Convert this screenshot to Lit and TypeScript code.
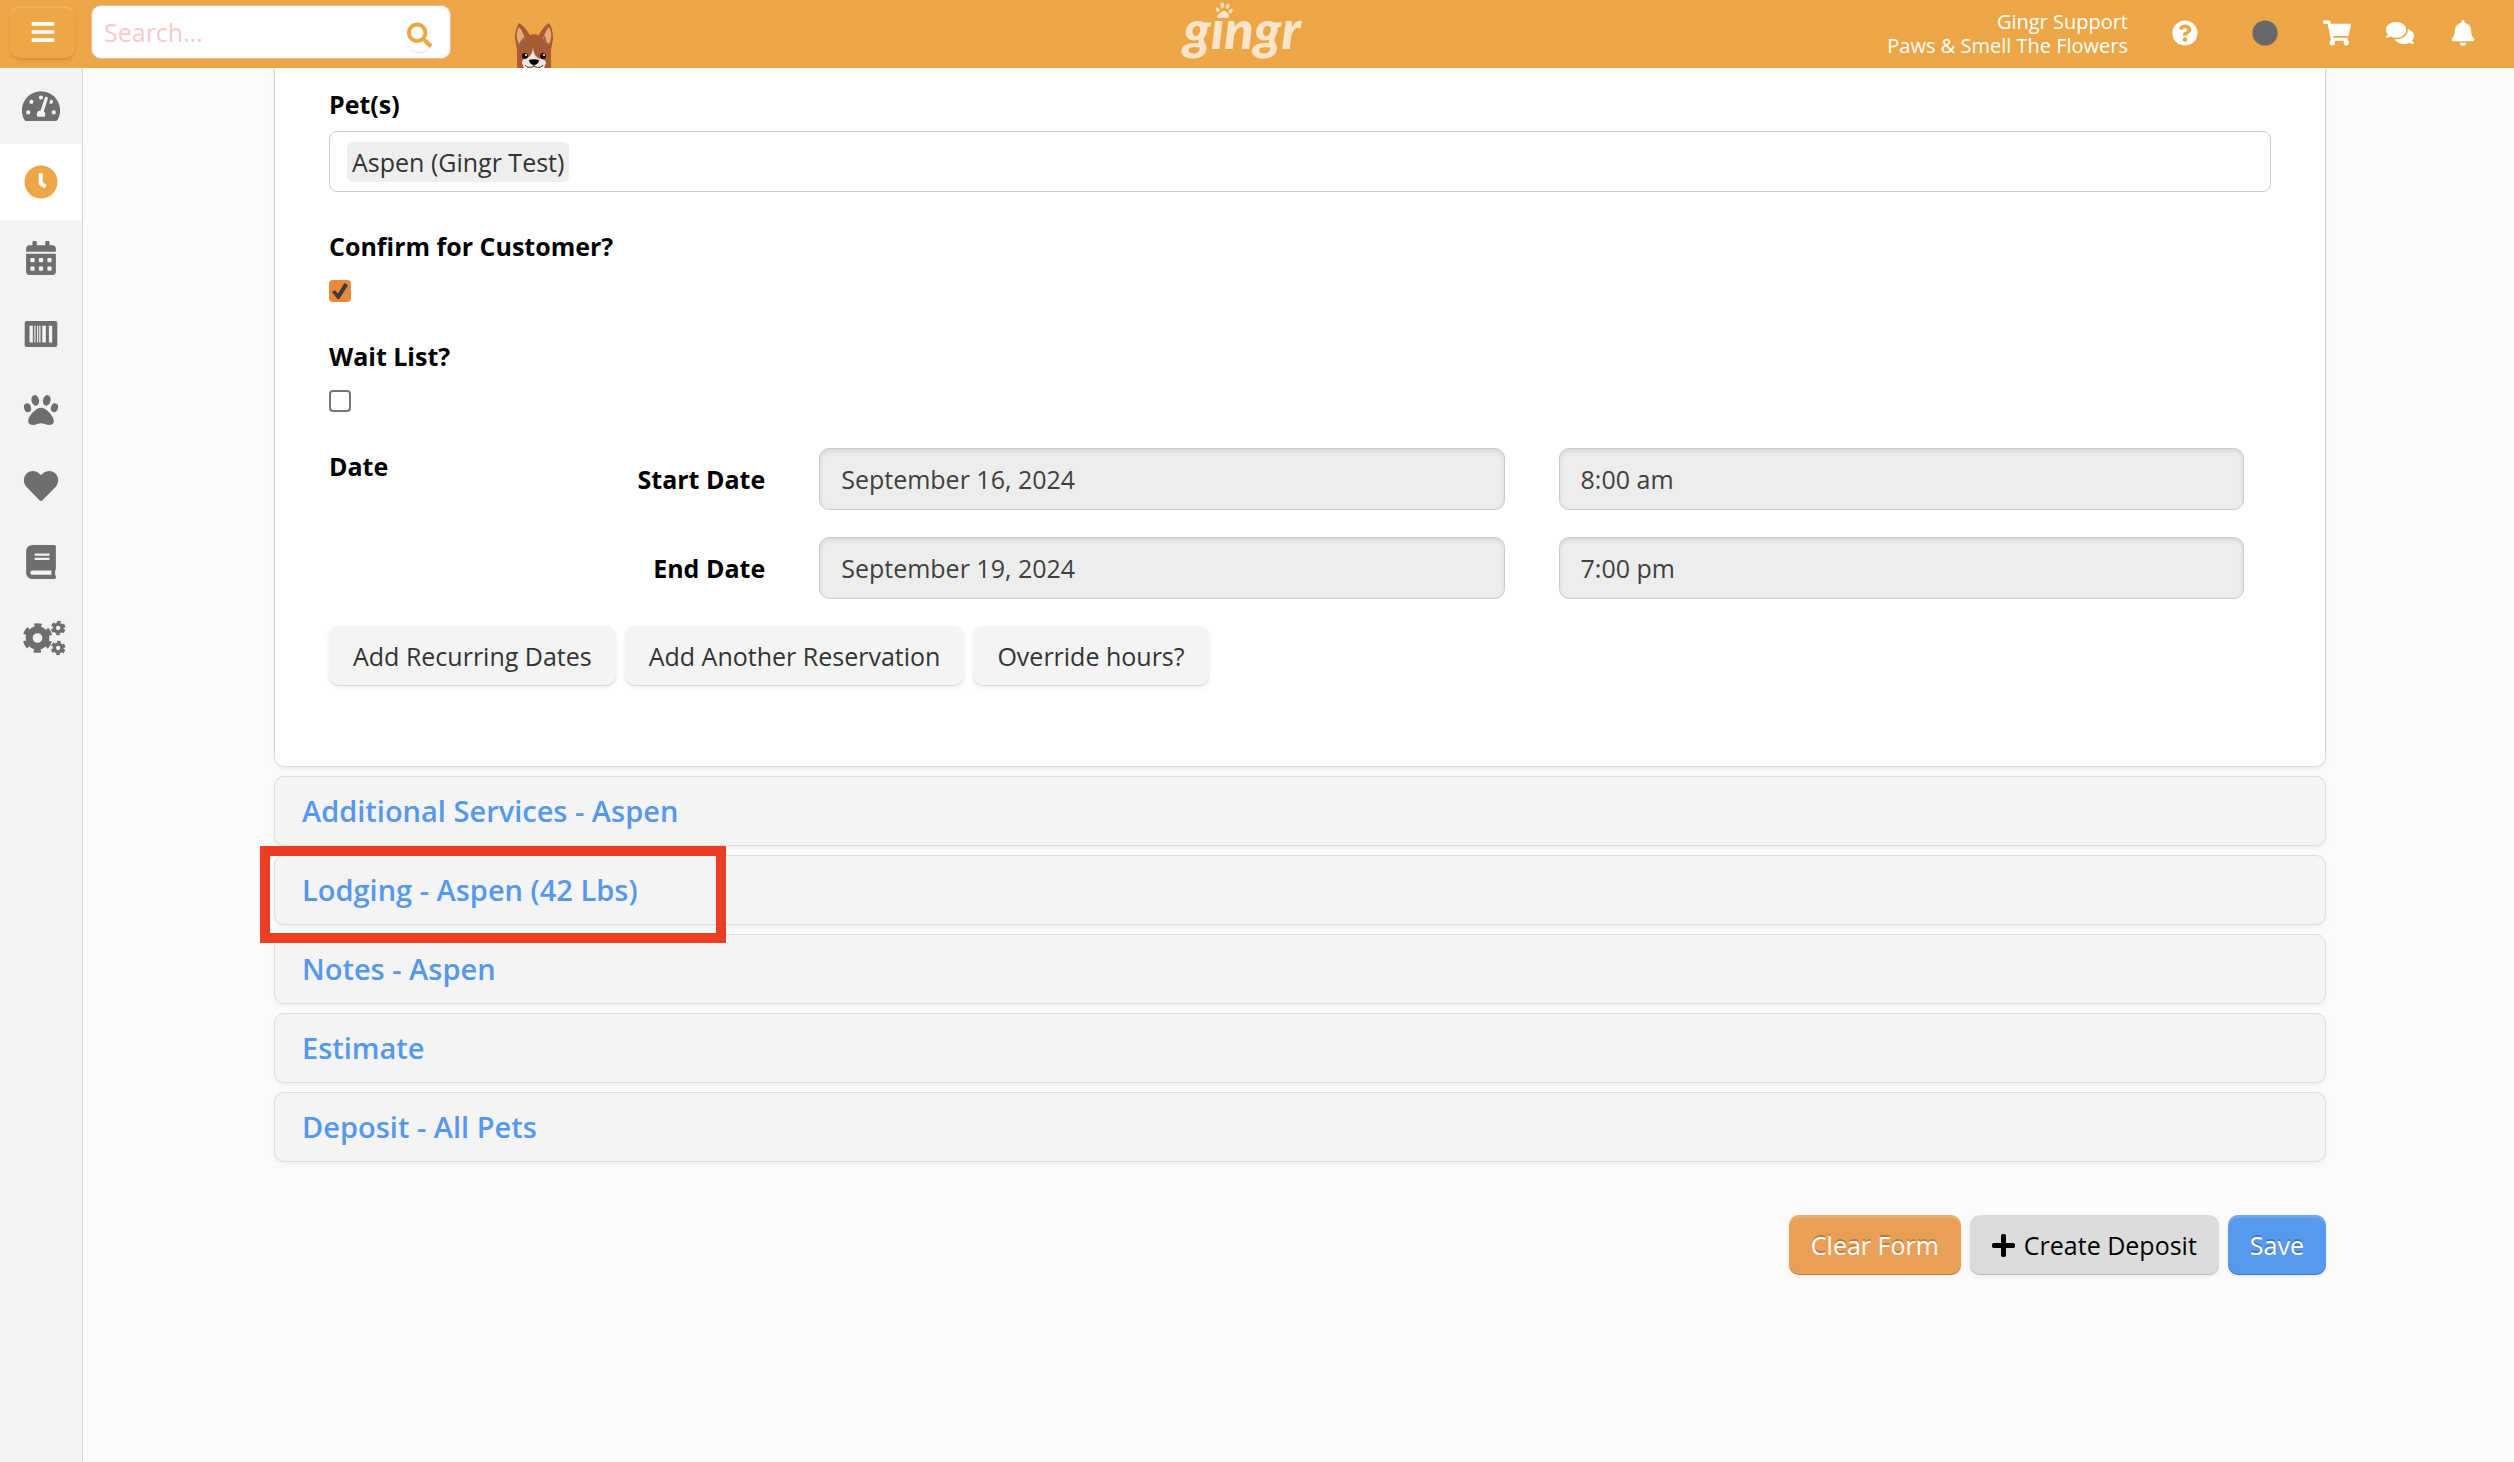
import { LitElement, html, css, svg } from "lit";
import { customElement, property } from "lit/decorators.js";

const ICONS: Record<string, { box: string; body: unknown }> = {
  bars: {
    box: "0 0 448 512",
    body: svg`<path d="M16 132h416c9 0 16-7 16-16V76c0-9-7-16-16-16H16C7 60 0 67 0 76v40c0 9 7 16 16 16zm0 160h416c9 0 16-7 16-16v-40c0-9-7-16-16-16H16c-9 0-16 7-16 16v40c0 9 7 16 16 16zm0 160h416c9 0 16-7 16-16v-40c0-9-7-16-16-16H16c-9 0-16 7-16 16v40c0 9 7 16 16 16z"/>`,
  },
  search: {
    box: "0 0 512 512",
    body: svg`<path d="M505 442.700L405.300 343c-4.500-4.500-10.600-7-17-7H372c27.600-35.300 44-79.700 44-128C416 93.100 322.900 0 208 0S0 93.100 0 208s93.100 208 208 208c48.300 0 92.700-16.400 128-44v16.300c0 6.400 2.500 12.500 7 17l99.700 99.700c9.400 9.400 24.600 9.400 33.900 0l28.300-28.300c9.400-9.400 9.400-24.600.1-34zM208 336c-70.700 0-128-57.200-128-128 0-70.700 57.200-128 128-128 70.700 0 128 57.200 128 128 0 70.700-57.200 128-128 128z"/>`,
  },
  help: {
    box: "0 0 512 512",
    body: svg`<path d="M504 256c0 137-111 248-248 248S8 393 8 256C8 119.100 119 8 256 8s248 111.100 248 248zM262.700 90c-54.500 0-89.300 23-116.500 63.800-3.500 5.300-2.400 12.400 2.700 16.300l34.700 26.300c5.200 3.900 12.600 3 16.700-2.100 17.900-22.700 30.100-35.800 57.300-35.800 20.400 0 45.700 13.100 45.700 33 0 15-12.400 22.700-32.500 34C247.100 238.500 216 254.900 216 296v4c0 6.600 5.400 12 12 12h56c6.600 0 12-5.400 12-12v-1.300c0-28.500 83.200-29.600 83.200-106.700 0-58-60.200-102-116.500-102zM256 338c-25.400 0-46 20.600-46 46 0 25.400 20.600 46 46 46s46-20.600 46-46c0-25.400-20.600-46-46-46z"/>`,
  },
  dot: { box: "0 0 512 512", body: svg`<circle cx="256" cy="256" r="248"/>` },
  cart: {
    box: "0 0 576 512",
    body: svg`<path d="M528.100 301.300l47.300-208C578.800 78.300 567.400 64 552 64H159.200l-9.200-44.800C147.800 8 137.900 0 126.500 0H24C10.700 0 0 10.700 0 24v16c0 13.300 10.700 24 24 24h69.900l70.200 343.400C147.300 417.100 136 435.200 136 456c0 30.900 25.100 56 56 56s56-25.100 56-56c0-15.700-6.400-29.800-16.800-40h209.600C430.400 426.200 424 440.300 424 456c0 30.900 25.100 56 56 56s56-25.100 56-56c0-22.200-12.900-41.300-31.600-50.400l5.500-24.300c3.400-15-8-29.300-23.400-29.300H218.100l-6.500-32h293.100c11.200 0 20.900-7.800 23.400-18.700z"/>`,
  },
  comments: {
    box: "0 0 576 512",
    body: svg`<path d="M416 192c0-88.400-93.100-160-208-160S0 103.600 0 192c0 34.300 14.100 65.900 38 92-13.400 30.200-35.500 54.200-35.800 54.500-2.200 2.300-2.800 5.700-1.500 8.700S4.800 352 8 352c36.600 0 66.900-12.300 88.700-25 32.200 15.700 70.300 25 111.300 25 114.900 0 208-71.600 208-160zm122 220c23.900-26 38-57.700 38-92 0-66.900-53.500-124.200-129.300-148.100.9 6.600 1.300 13.300 1.300 20.100 0 105.900-107.700 192-240 192-10.800 0-21.300-.8-31.700-1.900C207.800 439.600 281.800 480 368 480c41 0 79.100-9.200 111.300-25 21.800 12.700 52.100 25 88.700 25 3.200 0 6.100-1.900 7.300-4.800 1.300-2.900.7-6.300-1.500-8.700-.3-.3-22.400-24.200-35.800-54.500z"/>`,
  },
  bell: {
    box: "0 0 448 512",
    body: svg`<path d="M224 512c35.300 0 63.900-28.600 63.900-64H160.100c0 35.400 28.600 64 63.900 64zm215.400-149.700c-19.300-20.800-55.500-52-55.500-154.300 0-77.700-54.500-139.900-127.900-155.200V32c0-17.700-14.300-32-32-32s-32 14.300-32 32v20.800C118.600 68.100 64.100 130.300 64.100 208c0 102.300-36.200 133.500-55.500 154.300-6 6.400-8.700 14.100-8.600 21.700.1 16.400 13 32 32.100 32h383.800c19.100 0 32-15.600 32.100-32 .1-7.600-2.600-15.300-8.600-21.700z"/>`,
  },
  gauge: {
    box: "0 0 576 512",
    body: svg`<path fill-rule="evenodd" d="M288 32C129 32 0 161 0 320c0 53 14 102 39 145 6 10 16 15 28 15h442c12 0 22-5 28-15 25-43 39-92 39-145C576 161 447 32 288 32zM288 96a32 32 0 1 1 0 64 32 32 0 0 1 0-64zM96 384a32 32 0 1 1 0-64 32 32 0 0 1 0 64zm48-160a32 32 0 1 1 0-64 32 32 0 0 1 0 64zm247-77l-62 193c15 11 23 26 23 44 0 12-3 22-9 32H233c-6-10-9-20-9-32 0-34 27-62 60-64l61-188c4-13 18-20 30-16 13 4 20 18 16 31zm23 66l16-49c4-3 9-4 14-4a32 32 0 1 1-30 53zm66 171a32 32 0 1 1 0-64 32 32 0 0 1 0 64z"/>`,
  },
  clock: {
    box: "0 0 512 512",
    body: svg`<circle cx="256" cy="256" r="248"/><path d="M252 124v152l72 54" fill="none" stroke="#fff" stroke-width="60" stroke-linejoin="round"/>`,
  },
  calendar: {
    box: "0 0 448 512",
    body: svg`<path fill-rule="evenodd" d="M0 464c0 26.500 21.500 48 48 48h352c26.500 0 48-21.500 48-48V192H0v272zM320 268c0-6.600 5.400-12 12-12h40c6.600 0 12 5.400 12 12v40c0 6.600-5.400 12-12 12h-40c-6.600 0-12-5.400-12-12v-40zm0 128c0-6.600 5.400-12 12-12h40c6.600 0 12 5.400 12 12v40c0 6.600-5.400 12-12 12h-40c-6.600 0-12-5.400-12-12v-40zM192 268c0-6.600 5.400-12 12-12h40c6.600 0 12 5.400 12 12v40c0 6.600-5.400 12-12 12h-40c-6.600 0-12-5.400-12-12v-40zm0 128c0-6.600 5.400-12 12-12h40c6.600 0 12 5.400 12 12v40c0 6.600-5.400 12-12 12h-40c-6.600 0-12-5.400-12-12v-40zM64 268c0-6.600 5.400-12 12-12h40c6.600 0 12 5.400 12 12v40c0 6.600-5.400 12-12 12H76c-6.600 0-12-5.400-12-12v-40zm0 128c0-6.600 5.400-12 12-12h40c6.600 0 12 5.400 12 12v40c0 6.600-5.400 12-12 12H76c-6.600 0-12-5.400-12-12v-40zM400 64h-48V16c0-8.800-7.200-16-16-16h-32c-8.800 0-16 7.200-16 16v48H160V16c0-8.800-7.200-16-16-16h-32c-8.800 0-16 7.200-16 16v48H48C21.500 64 0 85.500 0 112v48h448v-48c0-26.500-21.500-48-48-48z"/>`,
  },
  barcode: {
    box: "0 0 512 408",
    body: svg`<path fill-rule="evenodd" d="M32 0h448a32 32 0 0 1 32 32v344a32 32 0 0 1-32 32H32a32 32 0 0 1-32-32V32A32 32 0 0 1 32 0zM76 76v260h52V76zm76 0v260h18V76zm42 0v260h18V76zm34 0v260h20V76zm48 0v260h56V76zm104 0v260h52V76z"/>`,
  },
  paw: {
    box: "0 0 512 448",
    body: svg`<path d="M256 192c-79 0-192 123-192 200 0 35 27 56 71 56 49 0 81-25 121-25 41 0 73 25 121 25 44 0 71-21 71-56 0-77-113-200-192-200z"/><ellipse cx="55" cy="190" rx="52" ry="66" transform="rotate(-18 55 190)"/><ellipse cx="170" cy="80" rx="56" ry="80" transform="rotate(-14 170 80)"/><ellipse cx="342" cy="80" rx="56" ry="80" transform="rotate(14 342 80)"/><ellipse cx="457" cy="190" rx="52" ry="66" transform="rotate(18 457 190)"/>`,
  },
  heart: {
    box: "0 0 512 448",
    body: svg`<path d="M462.300 30.600C407.500-16.100 326-7.700 275.700 44.200L256 64.500l-19.700-20.300C186.100-7.700 104.500-16.100 49.700 30.600c-62.800 53.600-66.100 149.800-9.900 207.900l193.500 199.800c12.500 12.900 32.800 12.900 45.300 0l193.500-199.800c56.300-58.100 53-154.300-9.800-207.900z"/>`,
  },
  book: {
    box: "0 0 448 512",
    body: svg`<path fill-rule="evenodd" d="M448 360V24c0-13.300-10.700-24-24-24H96C43 0 0 43 0 96v320c0 53 43 96 96 96h328c13.300 0 24-10.700 24-24v-16c0-7.500-3.500-14.300-8.900-18.700-4.200-15.400-4.200-59.300 0-74.700 5.400-4.300 8.900-11.100 8.900-18.600zM128 134c0-3.300 2.700-6 6-6h212c3.300 0 6 2.700 6 6v20c0 3.300-2.700 6-6 6H134c-3.300 0-6-2.700-6-6v-20zm0 64c0-3.300 2.700-6 6-6h212c3.300 0 6 2.700 6 6v20c0 3.300-2.700 6-6 6H134c-3.300 0-6-2.700-6-6v-20zm253.400 250H96c-17.700 0-32-14.300-32-32 0-17.600 14.400-32 32-32h285.400c-1.900 17.100-1.900 46.900 0 64z"/>`,
  },
  cogs: {
    box: "0 0 128 102",
    body: svg`<g fill="none" stroke="currentColor"><circle cx="43" cy="51" r="25" stroke-width="21"/><circle cx="43" cy="51" r="38" stroke-width="13" stroke-dasharray="21 18.790" stroke-dashoffset="-9.400"/><circle cx="105" cy="21" r="11.500" stroke-width="10"/><circle cx="105" cy="21" r="18" stroke-width="8" stroke-dasharray="10.500 8.350" stroke-dashoffset="-4"/><circle cx="105" cy="81" r="11.500" stroke-width="10"/><circle cx="105" cy="81" r="18" stroke-width="8" stroke-dasharray="10.500 8.350" stroke-dashoffset="-4"/></g>`,
  },
  plus: {
    box: "0 0 448 448",
    body: svg`<path d="M416 176H272V32c0-17.700-14.300-32-32-32h-32c-17.700 0-32 14.300-32 32v144H32c-17.700 0-32 14.300-32 32v32c0 17.700 14.300 32 32 32h144v144c0 17.700 14.300 32 32 32h32c17.700 0 32-14.300 32-32V272h144c17.700 0 32-14.300 32-32v-32c0-17.700-14.300-32-32-32z"/>`,
  },
  logopaw: {
    box: "0 0 54 54",
    body: svg`<path d="M24 27c8-3 11 3 15 7 5 5 4 13-3 14-5 1-8-2-13-1-5 0-9 4-14 1-5-4-2-11 4-13 5-2 6-6 11-8z"/><ellipse cx="8" cy="23" rx="5" ry="7" transform="rotate(-28 8 23)"/><ellipse cx="22" cy="10" rx="6" ry="8" transform="rotate(-6 22 10)"/><ellipse cx="38" cy="13" rx="5" ry="8" transform="rotate(18 38 13)"/><ellipse cx="47" cy="27" rx="5" ry="7" transform="rotate(36 47 27)"/>`,
  },
  dog: {
    box: "0 0 40 46",
    body: svg`<path d="M3 46V28L1 16C1 10 3 4 5 1c5 3 9 9 11 12 3-1 6-1 9 0 2-4 5-9 10-12 3 4 4 10 4 16l-2 11v18z" fill="#a95b33"/><path d="M5 5c3 3 5 8 6 12l-6 5c-3-6-3-12 0-17zM35 5c-3 3-5 8-6 12l6 5c3-6 3-12 0-17z" fill="#eda874"/><path d="M11 15c-3 1-5 4-6 8l4-1zM31 13c-1 3-2 5-2 7l4 2z" fill="#8d6a50"/><path d="M19 23c0 6 1 10 5 13 4 1 8 2 8 5l-2 5H10l-2-5c0-4 3-5 7-6 3-3 4-6 4-12z" fill="#f3e6dc"/><path d="M9 26l6-2M25 24l5 2" stroke="#87664c" stroke-width="2" fill="none"/><circle cx="11" cy="34" r="3" fill="#16100c"/><circle cx="29" cy="34" r="3" fill="#16100c"/><circle cx="12" cy="33" r="1" fill="#fff"/><circle cx="30" cy="33" r="1" fill="#fff"/><path d="M15 38c3-1 7-1 10 0 0 3-3 5-5 5s-5-2-5-5z" fill="#000"/><path d="M20 42v2M11 43c2 3 6 3 9 1 3 2 7 2 9-1" stroke="#333" fill="none"/>`,
  },
};

@customElement("ui-icon")
class UiIcon extends LitElement {
  static styles = css`
    :host { display: inline-flex; }
    svg { display: block; width: 100%; height: 100%; fill: currentColor; }
  `;
  @property() name = "";
  render() {
    const icon = ICONS[this.name];
    return html`<svg viewBox=${icon.box} aria-hidden="true">${icon.body}</svg>`;
  }
}

@customElement("app-root")
class AppRoot extends LitElement {
  static styles = css`
    :host {
      display: flex;
      flex-direction: column;
      min-height: 100vh;
      box-sizing: border-box;
      background: #fbfbfb;
      color: #333;
      font: 25px/36px "Open Sans", sans-serif;
    }
    *, *::before { box-sizing: border-box; }
    button, input { font: inherit; margin: 0; }
    button { cursor: pointer; }
    a { text-decoration: none; }

    .topbar {
      display: grid;
      grid-template-columns: 1fr auto 1fr;
      align-items: center;
      height: 68px;
      background: #eda646;
      color: #fff;
    }
    .left, .right { display: flex; align-items: center; height: 68px; }
    .left { padding-left: 10px; }
    .right { justify-content: flex-end; padding-right: 37px; }
    .menu {
      display: grid;
      place-items: center;
      width: 65px;
      height: 52px;
      margin: 0 16px 4px 0;
      padding: 0;
      border: 0;
      border-radius: 10px;
      background: none;
      color: #fff;
      box-shadow: inset 0 2px 0 rgba(255, 255, 255, 0.14), 0 2px 3px rgba(0, 0, 0, 0.12);
    }
    .menu ui-icon { width: 24px; height: 26px; }
    .search {
      display: flex;
      align-items: center;
      width: 360px;
      height: 54px;
      margin-bottom: 4px;
      padding: 0 18px 0 12px;
      border: 1px solid #f5b5a8;
      border-radius: 10px;
      background: #fff;
    }
    .search input {
      flex: 1;
      min-width: 0;
      padding: 0;
      border: 0;
      outline: 0;
      background: none;
    }
    .search input::placeholder { color: #f7caca; opacity: 1; }
    .find {
      display: flex;
      padding: 10px 0 4px;
      border: 0;
      border-radius: 12px;
      background: none;
      color: #eda646;
      box-shadow: 0 1px 0 #e4e4e4;
    }
    .find ui-icon { width: 25px; height: 26px; }
    .dog { align-self: flex-end; width: 40px; height: 46px; margin-left: 63px; }

    .logo {
      position: relative;
      padding: 0 30px 10px 0;
      color: #fae5ca;
      font: italic 900 54px/58px Lato, sans-serif;
    }
    .badge {
      position: absolute;
      top: 0;
      left: 30px;
      display: flex;
      padding: 2px 2px 0;
      background: #eda646;
    }
    .badge ui-icon { width: 18px; height: 18px; }

    .account { color: #fff; font-size: 20px; line-height: 24px; text-align: right; }
    .tools { display: flex; align-items: center; margin-left: 43px; padding-bottom: 2px; }
    .tool { display: flex; padding: 0; border: 0; background: none; color: #fff; }
    .tool ui-icon { width: 28px; height: 26px; }
    .help { margin-right: 52px; }
    .status { margin-right: 44px; color: #686868; }
    .basket, .chat { margin-right: 35px; }

    .body { display: flex; flex: 1; }
    .sidebar {
      display: flex;
      flex-direction: column;
      width: 83px;
      border-right: 1px solid #d9d9d9;
      background: #f3f3f3;
    }
    .nav {
      display: flex;
      align-items: center;
      height: 76px;
      padding-left: 21px;
      color: #6e6e6e;
      border-right: 1px solid #f3f3f3;
    }
    .nav.active { background: #fff; color: #eda646; }
    .nav ui-icon { width: 40px; height: 34px; }
    .nav .wide { width: 47px; }
    .nav .small { height: 26px; }
    .nav .mid { height: 30px; }

    main { flex: 1; min-width: 0; padding: 0 188px 0 191px; }
    .card {
      margin-bottom: 9px;
      padding: 18px 54px 80px;
      border: 1px solid #dcdcdc;
      border-top: 0;
      border-radius: 0 0 10px 10px;
      background: #fff;
      box-shadow: 0 2px 4px rgba(0, 0, 0, 0.06);
    }
    .label { display: block; color: #000; font-weight: 700; }
    .pets {
      display: flex;
      align-items: center;
      height: 61px;
      margin: 9px 0 36px;
      padding: 0 17px;
      border: 1px solid #ccc;
      border-radius: 8px;
    }
    .tag {
      padding: 2px 5px;
      border-radius: 6px;
      background: #eee;
    }
    .check {
      display: grid;
      place-items: center;
      appearance: none;
      width: 22px;
      height: 22px;
      margin: 16px 0 36px;
      border: 2px solid #767676;
      border-radius: 4px;
      background: #fff;
    }
    .check:checked { border: 0; background: #ea883c; }
    .check:checked::before {
      content: "";
      width: 16px;
      height: 16px;
      background: #3b3b3b;
      clip-path: polygon(0 56%, 18% 46%, 38% 66%, 78% 0, 100% 14%, 46% 100%, 34% 100%);
    }
    .dates {
      display: grid;
      grid-template-columns: 7fr 11fr 11fr;
      gap: 27px 54px;
      padding-right: 27px;
    }
    .names { display: flex; justify-content: space-between; }
    .names .end { padding-top: 13px; margin-left: auto; }
    .field {
      width: 100%;
      height: 62px;
      padding: 0 21px;
      border: 1px solid #ccc;
      border-radius: 10px;
      background: #ededed;
      color: #404040;
      box-shadow: inset 0 2px 4px rgba(0, 0, 0, 0.1);
    }
    .row { display: flex; gap: 9px; }
    .extras { margin-top: 27px; }
    .btn {
      height: 60px;
      padding: 0 24px;
      border: 0;
      border-radius: 10px;
      background: #f4f4f4;
      color: #333;
      white-space: nowrap;
      box-shadow: inset 0 -1px 0 #d9d9d9, 0 2px 5px rgba(0, 0, 0, 0.07);
    }
    .panel {
      position: relative;
      height: 70px;
      margin-bottom: 9px;
      padding: 0 27px;
      border: 1px solid #dcdcdc;
      border-radius: 10px;
      background: #f4f4f4;
      box-shadow: 0 2px 4px rgba(0, 0, 0, 0.06);
    }
    .panel h2 { margin: 0; font-size: 29px; line-height: 68px; font-weight: 600; }
    .panel a { color: #5598ec; }
    .marker {
      position: absolute;
      top: -10px;
      left: -15px;
      width: 466px;
      height: 97px;
      border: 10px solid #ec3e23;
      z-index: 1;
      pointer-events: none;
    }
    .actions { justify-content: flex-end; padding-top: 44px; }
    .actions .btn { padding: 0 22px; }
    .clear, .save {
      color: #fff;
      text-shadow: 0 -2px 0 rgba(0, 0, 0, 0.22);
      box-shadow: inset 0 3px 0 rgba(255, 255, 255, 0.14), inset 0 -1px 0 rgba(0, 0, 0, 0.2), 0 2px 4px rgba(0, 0, 0, 0.06);
    }
    .clear { background: #e8a056; }
    .create { display: flex; align-items: center; gap: 9px; background: #dcdcdc; color: #000; box-shadow: inset 0 -1px 0 #bbb, 0 2px 4px rgba(0, 0, 0, 0.06); }
    .create ui-icon { width: 23px; height: 23px; }
    .save { background: #5799ed; }
  `;

  private nav = [
    { icon: "gauge", label: "Dashboard", cls: "" },
    { icon: "clock", label: "Reservations", cls: "" },
    { icon: "calendar", label: "Calendar", cls: "" },
    { icon: "barcode", label: "Retail", cls: "small" },
    { icon: "paw", label: "Animals", cls: "mid" },
    { icon: "heart", label: "Owners", cls: "mid" },
    { icon: "book", label: "Reports", cls: "" },
    { icon: "cogs", label: "Settings", cls: "wide" },
  ];

  private rows = [
    { id: "start", label: "Start Date", date: "September 16, 2024", time: "8:00 am" },
    { id: "end", label: "End Date", date: "September 19, 2024", time: "7:00 pm" },
  ];

  private panels = [
    "Additional Services - Aspen",
    "Lodging - Aspen (42 Lbs)",
    "Notes - Aspen",
    "Estimate",
    "Deposit - All Pets",
  ];

  render() {
    return html`
      <header class="topbar">
        <div class="left">
          <button class="menu" aria-label="Menu"><ui-icon name="bars"></ui-icon></button>
          <div class="search" role="search">
            <input type="text" placeholder="Search..." aria-label="Search" />
            <button class="find" aria-label="Find"><ui-icon name="search"></ui-icon></button>
          </div>
          <ui-icon class="dog" name="dog"></ui-icon>
        </div>
        <div class="logo">gingr<span class="badge"><ui-icon name="logopaw"></ui-icon></span></div>
        <div class="right">
          <div class="account"><div>Gingr Support</div><div>Paws &amp; Smell The Flowers</div></div>
          <div class="tools">
            <button class="tool help" aria-label="Help"><ui-icon name="help"></ui-icon></button>
            <button class="tool status" aria-label="Status"><ui-icon name="dot"></ui-icon></button>
            <button class="tool basket" aria-label="Cart"><ui-icon name="cart"></ui-icon></button>
            <button class="tool chat" aria-label="Messages"><ui-icon name="comments"></ui-icon></button>
            <button class="tool" aria-label="Notifications"><ui-icon name="bell"></ui-icon></button>
          </div>
        </div>
      </header>
      <div class="body">
        <nav class="sidebar">
          ${this.nav.map(
            (n, i) => html`<a class="nav ${i === 1 ? "active" : ""}" href="#" aria-label=${n.label}>
              <ui-icon class=${n.cls} name=${n.icon}></ui-icon>
            </a>`
          )}
        </nav>
        <main>
          <section class="card">
            <div class="label">Pet(s)</div>
            <div class="pets"><span class="tag">Aspen (Gingr Test)</span></div>
            <label class="label" for="confirm">Confirm for Customer?</label>
            <input class="check" id="confirm" type="checkbox" checked />
            <label class="label" for="wait">Wait List?</label>
            <input class="check" id="wait" type="checkbox" />
            <div class="dates">
              ${this.rows.map(
                (r, i) => html`
                  <div class="names">
                    ${i === 0 ? html`<span class="label">Date</span>` : ""}
                    <label class="label end" for=${r.id}>${r.label}</label>
                  </div>
                  <input class="field" id=${r.id} type="text" readonly .value=${r.date} />
                  <input class="field" type="text" readonly aria-label="${r.label} time" .value=${r.time} />
                `
              )}
            </div>
            <div class="row extras">
              <button class="btn">Add Recurring Dates</button>
              <button class="btn">Add Another Reservation</button>
              <button class="btn">Override hours?</button>
            </div>
          </section>
          ${this.panels.map(
            (p, i) => html`<section class="panel">
              <h2><a href="#">${p}</a></h2>
              ${i === 1 ? html`<div class="marker"></div>` : ""}
            </section>`
          )}
          <div class="row actions">
            <button class="btn clear">Clear Form</button>
            <button class="btn create"><ui-icon name="plus"></ui-icon>Create Deposit</button>
            <button class="btn save">Save</button>
          </div>
        </main>
      </div>
    `;
  }
}
